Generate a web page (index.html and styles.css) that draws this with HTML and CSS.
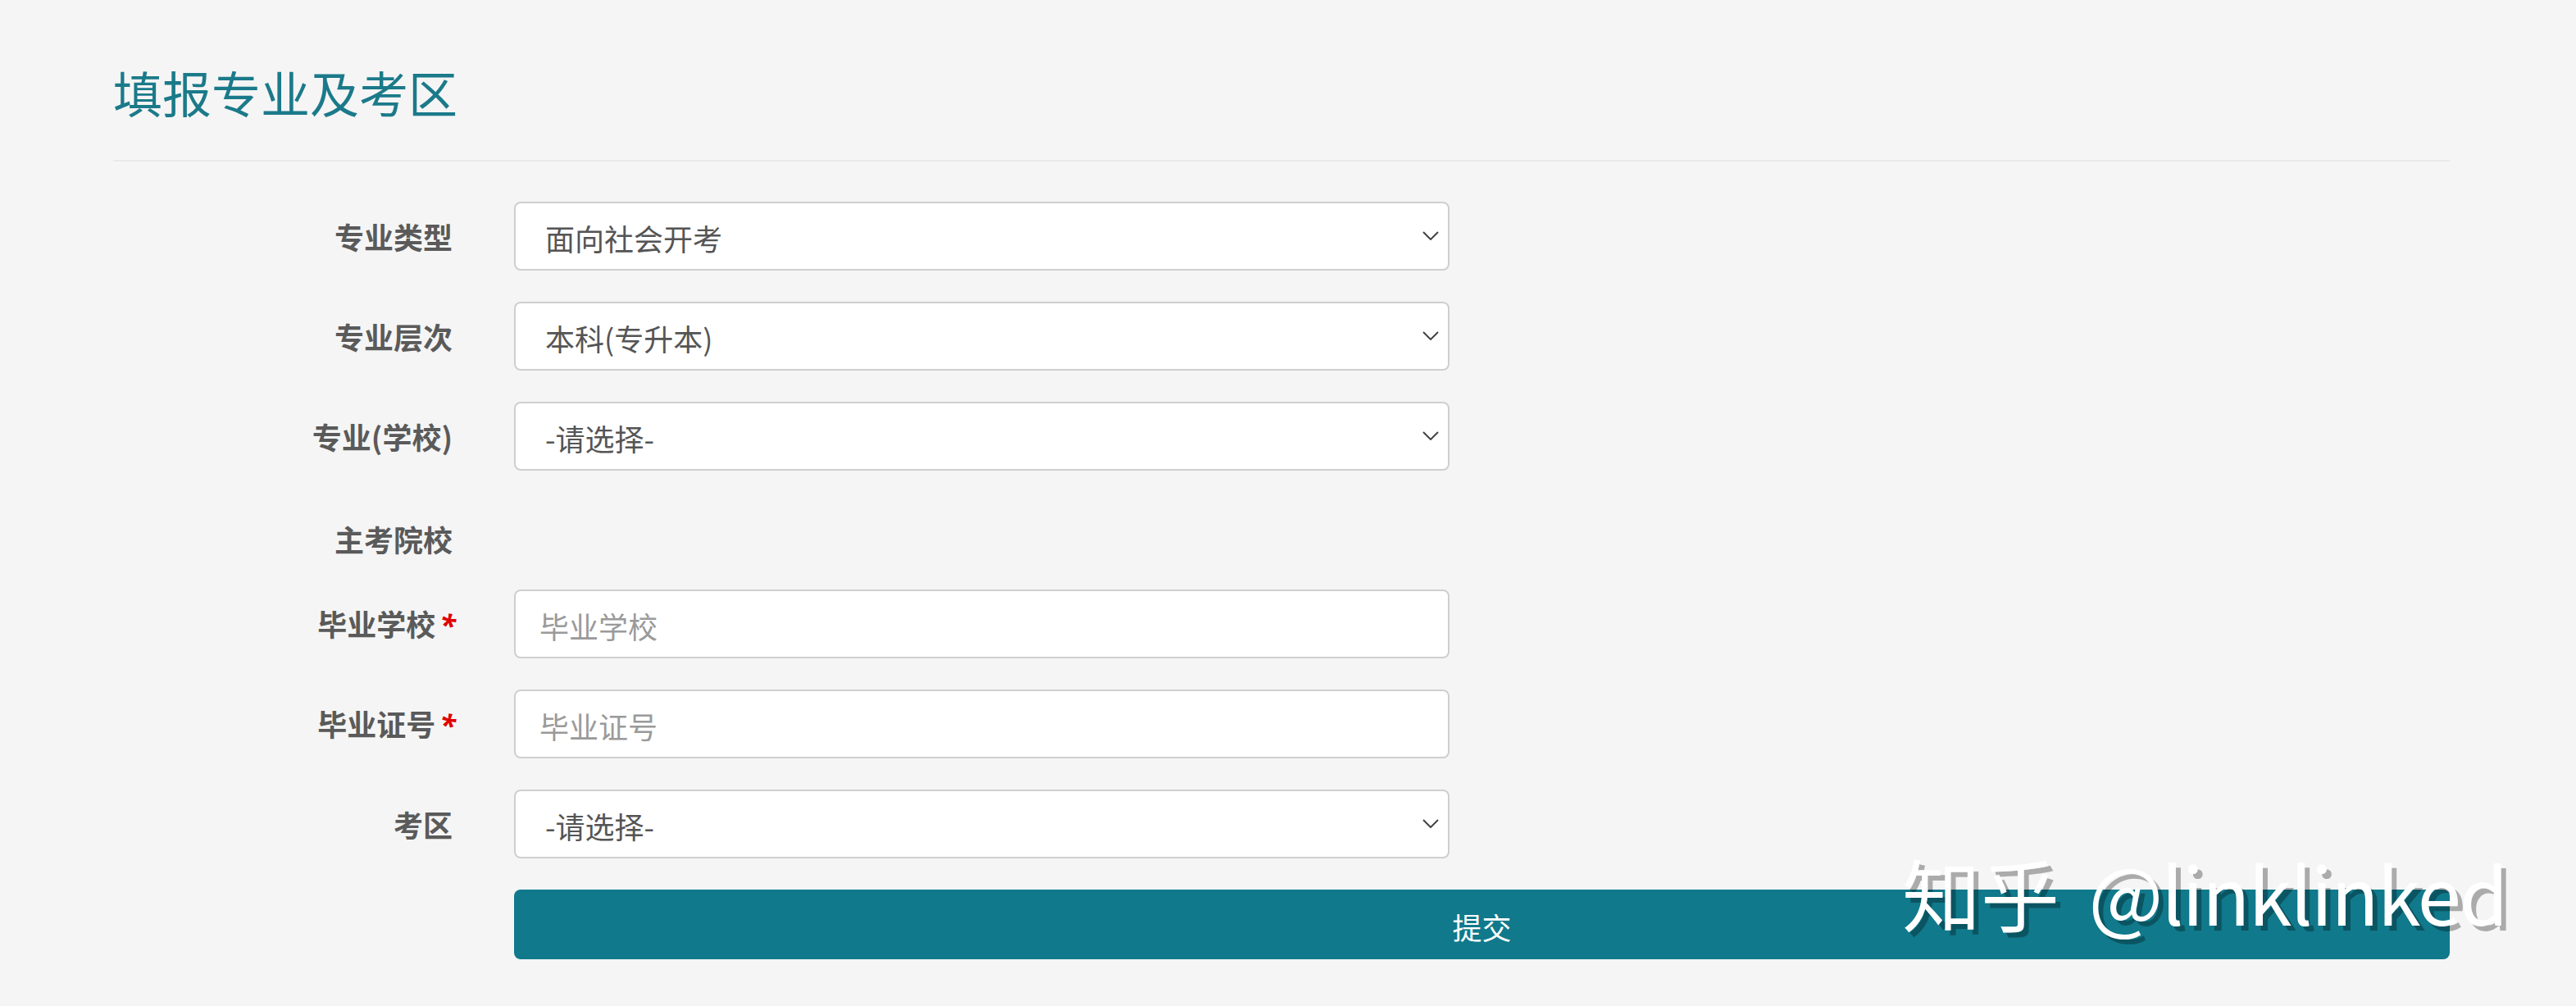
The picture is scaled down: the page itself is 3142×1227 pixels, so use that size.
FILE: index.html
```html
<!DOCTYPE html>
<html lang="zh-CN">
<head>
<meta charset="utf-8">
<title>填报专业及考区</title>
<link rel="stylesheet" href="styles.css">
</head>
<body>
<div class="page">
  <header class="page-header">
    <h1 class="page-title">填报专业及考区</h1>
  </header>

  <form class="apply-form">
    <div class="form-row">
      <label class="form-label">专业类型</label>
      <div class="select-wrap">
        <select class="form-control">
          <option>面向社会开考</option>
        </select>
        <svg class="chevron" viewBox="0 0 20 11" width="20" height="11"><path d="M1 1 L10 10 L19 1" fill="none" stroke="#444" stroke-width="2"/></svg>
      </div>
    </div>

    <div class="form-row">
      <label class="form-label">专业层次</label>
      <div class="select-wrap">
        <select class="form-control">
          <option>本科(专升本)</option>
        </select>
        <svg class="chevron" viewBox="0 0 20 11" width="20" height="11"><path d="M1 1 L10 10 L19 1" fill="none" stroke="#444" stroke-width="2"/></svg>
      </div>
    </div>

    <div class="form-row">
      <label class="form-label">专业(学校)</label>
      <div class="select-wrap">
        <select class="form-control">
          <option>-请选择-</option>
        </select>
        <svg class="chevron" viewBox="0 0 20 11" width="20" height="11"><path d="M1 1 L10 10 L19 1" fill="none" stroke="#444" stroke-width="2"/></svg>
      </div>
    </div>

    <div class="form-row form-row-static">
      <label class="form-label">主考院校</label>
      <div class="static-value"></div>
    </div>

    <div class="form-row">
      <label class="form-label">毕业学校<span class="req">*</span></label>
      <input class="form-control text-input" type="text" placeholder="毕业学校">
    </div>

    <div class="form-row">
      <label class="form-label">毕业证号<span class="req">*</span></label>
      <input class="form-control text-input" type="text" placeholder="毕业证号">
    </div>

    <div class="form-row">
      <label class="form-label">考区</label>
      <div class="select-wrap">
        <select class="form-control">
          <option>-请选择-</option>
        </select>
        <svg class="chevron" viewBox="0 0 20 11" width="20" height="11"><path d="M1 1 L10 10 L19 1" fill="none" stroke="#444" stroke-width="2"/></svg>
      </div>
    </div>

    <div class="form-row form-row-actions">
      <span class="form-label"></span>
      <button type="button" class="btn-submit">提交</button>
    </div>
  </form>

  <div class="watermark">知乎 <span class="watermark-handle">@linklinked</span></div>
</div>
</body>
</html>
```

FILE: styles.css
```css
html, body {
  margin: 0;
  padding: 0;
}

body {
  background: #f5f5f5;
  font-family: "Noto Sans CJK SC", "Noto Sans", sans-serif;
  color: #555;
}

.page {
  position: relative;
  padding: 0 154px 0 138px;
  height: 1227px;
  box-sizing: border-box;
  overflow: hidden;
}

.page-header {
  padding-top: 82px;
  padding-bottom: 53px;
  border-bottom: 2px solid #e9e9e9;
}

.page-title {
  margin: 0;
  font-size: 60px;
  line-height: 1;
  font-weight: 400;
  color: #1b7a8a;
}

.apply-form {
  display: flex;
  flex-direction: column;
  gap: 38px;
  padding-top: 49px;
}

.form-row {
  display: grid;
  grid-template-columns: 414px 1141px;
  column-gap: 75px;
  align-items: center;
  height: 84px;
}

.form-row-static {
  height: 69px;
  align-items: end;
}

.form-row-actions {
  grid-template-columns: 414px 1fr;
  height: 85px;
}

.form-label {
  display: block;
  text-align: right;
  font-size: 36px;
  line-height: 48px;
  font-weight: 700;
  color: #5a5a5a;
}

.req {
  color: #e00000;
  font-weight: 700;
  font-style: italic;
  margin-left: 5px;
  margin-right: -4px;
  font-family: "Noto Sans", sans-serif;
}

.select-wrap {
  position: relative;
  height: 84px;
}

.form-control {
  display: block;
  width: 100%;
  height: 84px;
  box-sizing: border-box;
  margin: 0;
  border: 2px solid #cfcfcf;
  border-radius: 8px;
  background: #fff;
  font-family: "Noto Sans CJK SC", "Noto Sans", sans-serif;
  font-size: 36px;
  color: #555;
  outline: none;
}

select.form-control {
  -webkit-appearance: none;
  appearance: none;
  padding: 4px 60px 0 36px;
}

.text-input {
  padding: 4px 28px 0 29px;
}

.text-input::placeholder {
  color: #9a9a9a;
}

.chevron {
  position: absolute;
  right: 13px;
  top: 36px;
  pointer-events: none;
}

.btn-submit {
  display: block;
  width: 100%;
  height: 85px;
  border: 0;
  border-radius: 8px;
  background: #10798b;
  color: #fff;
  font-family: "Noto Sans CJK SC", "Noto Sans", sans-serif;
  font-size: 36px;
  padding: 4px 0 0;
}

.watermark {
  position: absolute;
  left: 2320px;
  top: 1030px;
  font-family: "Noto Sans CJK SC", "Noto Sans", sans-serif;
  font-size: 96px;
  line-height: 1.2;
  color: #fff;
  text-shadow: 6px 6px 0 rgba(0, 0, 0, 0.3);
  white-space: nowrap;
  word-spacing: 14px;
  pointer-events: none;
}

.watermark-handle {
  letter-spacing: -2px;
}
```
